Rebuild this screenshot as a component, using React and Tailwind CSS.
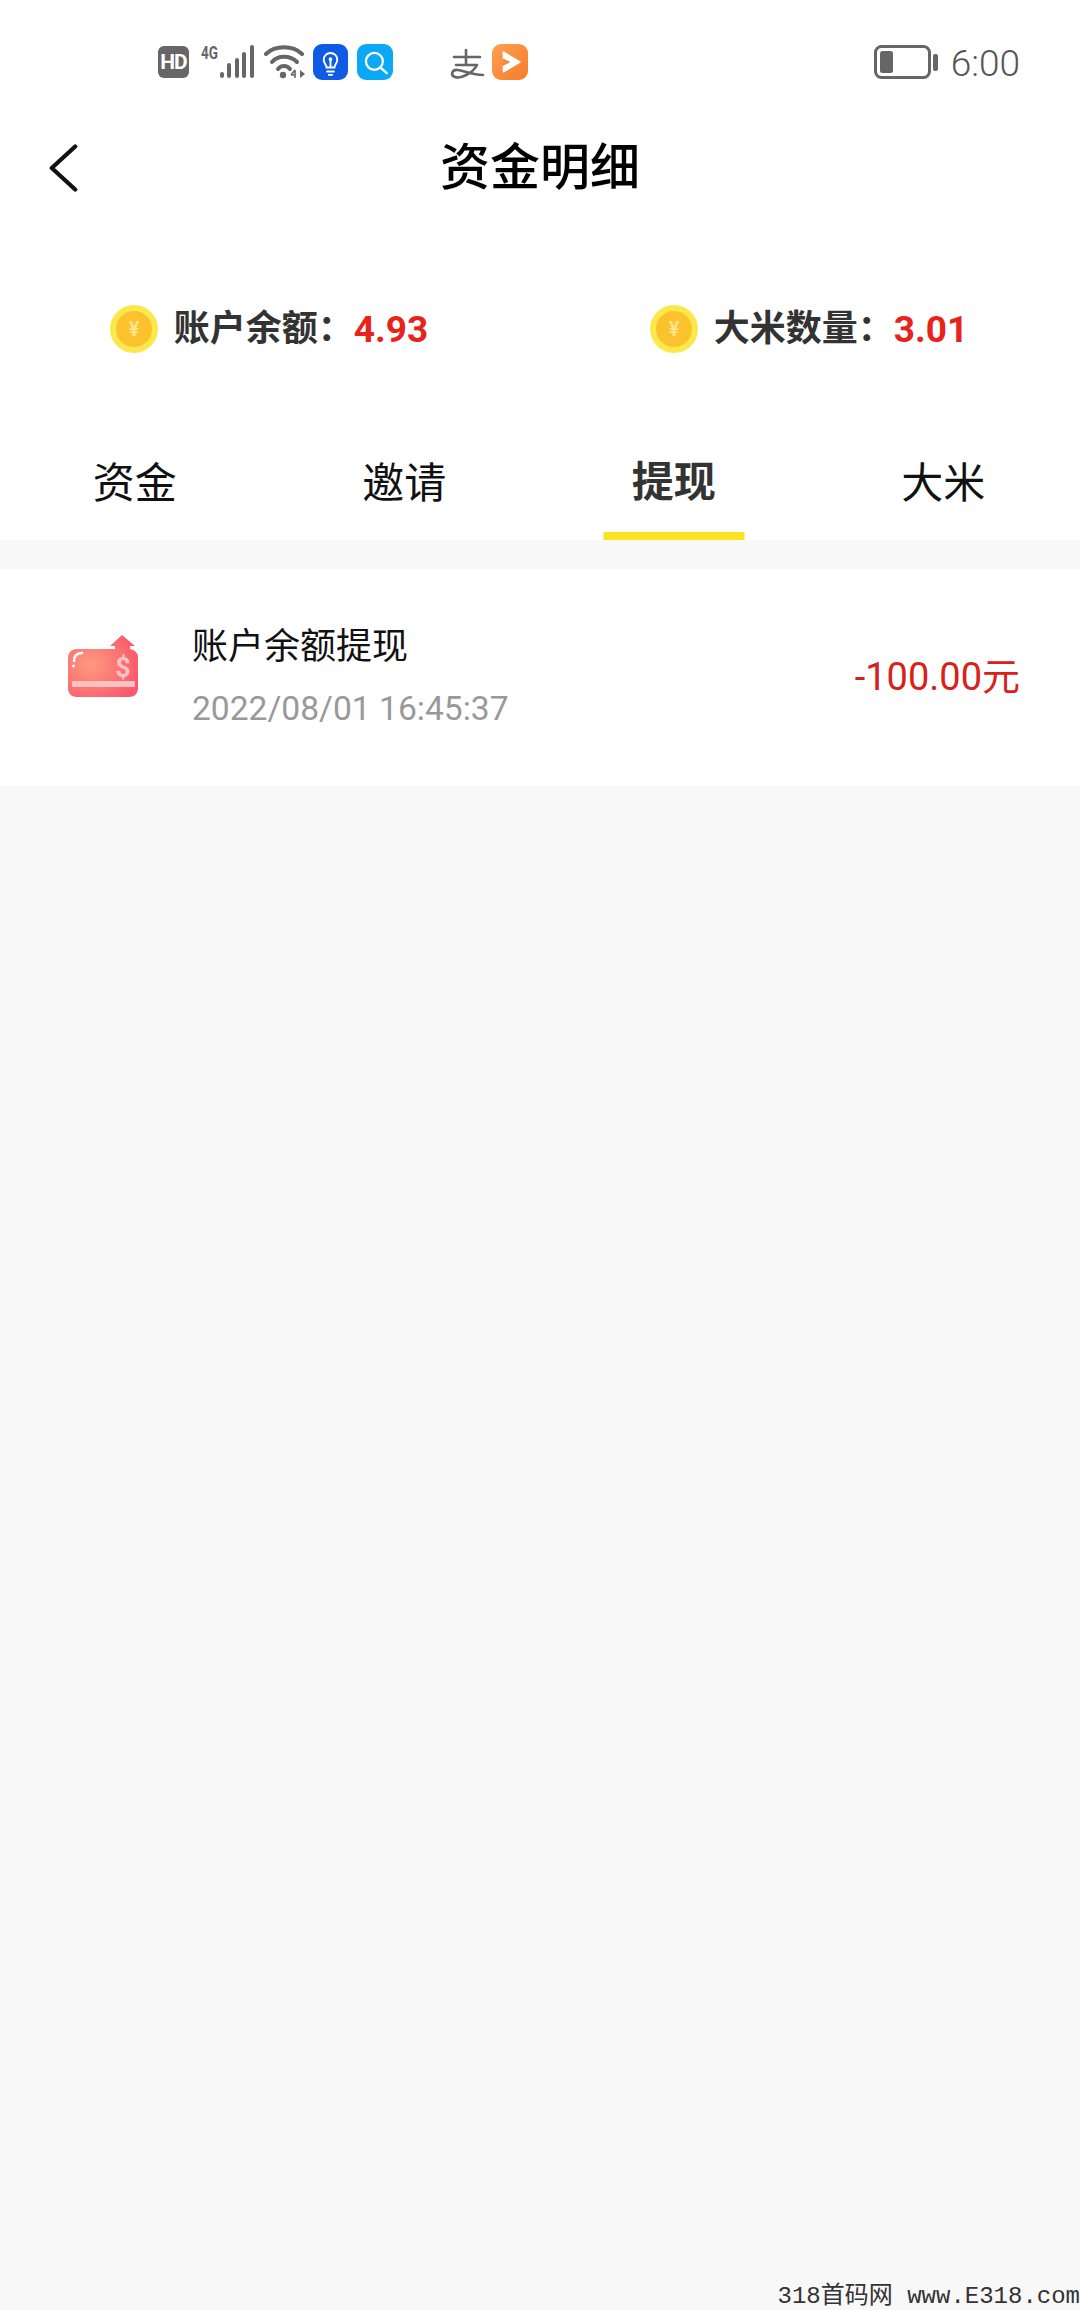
import React from 'react';

const cjk = "font-['Roboto','Noto_Sans_CJK_SC',sans-serif]";

const HdIcon = () => (
  <div className="w-[31px] h-[32px] rounded-[6px] bg-[#666] flex items-center justify-center">
    <span className="font-['Roboto',sans-serif] font-bold text-[21px] leading-none text-white tracking-[-1px]">HD</span>
  </div>
);

const SignalIcon = () => (
  <div className="relative w-[54px] h-[36px] ml-[12px]">
    <span className="absolute left-0 top-[2px] font-['Roboto',sans-serif] font-bold text-[18px] leading-[14px] text-[#666] scale-x-75 origin-left">4G</span>
    <svg viewBox="0 0 54 36" className="w-[54px] h-[36px]">
      <rect x="19" y="28" width="4" height="6" rx="2" fill="#666" />
      <rect x="26" y="19" width="4" height="15" rx="2" fill="#666" />
      <rect x="34" y="14" width="4" height="20" rx="2" fill="#666" />
      <rect x="41" y="8" width="4" height="26" rx="2" fill="#666" />
      <rect x="49" y="1" width="4" height="33" rx="2" fill="#666" />
    </svg>
  </div>
);

const WifiIcon = () => (
  <svg viewBox="0 0 42 36" className="w-[42px] h-[36px] ml-[9px]">
    <path d="M2 10 C11 1 29 1 38 10" fill="none" stroke="#666" strokeWidth="4" strokeLinecap="round" />
    <path d="M8 18 C14 11 26 11 33 18" fill="none" stroke="#666" strokeWidth="4" strokeLinecap="round" />
    <path d="M14 25 C17 21 23 21 26 25" fill="none" stroke="#666" strokeWidth="4" strokeLinecap="round" />
    <circle cx="19" cy="31" r="3.2" fill="#666" />
    <path d="M31 26 V34 M27 31 L31 26 M27 31 H31" fill="none" stroke="#666" strokeWidth="1.6" />
    <path d="M36 26 V34 L41 30 Z" fill="#666" />
  </svg>
);

const BulbApp = () => (
  <div className="w-[35px] h-[36px] rounded-[9px] bg-[#0f5be6] flex items-center justify-center ml-[7px]">
    <svg viewBox="0 0 24 24" className="w-[27px] h-[27px]" fill="none" stroke="#fff" strokeWidth="1.7" strokeLinecap="round">
      <path d="M8.5 16.5 C8.5 14 6 13 6 9.5 A6 6 0 0 1 18 9.5 C18 13 15.500 14 15.500 16.500 Z" />
      <path d="M9 20 H15 M10.500 23 H13.500 M12 16 V10" />
      <circle cx="12" cy="9" r="0.8" fill="#fff" />
    </svg>
  </div>
);

const SearchApp = () => (
  <div className="w-[36px] h-[36px] rounded-[9px] bg-[#0ba8f5] flex items-center justify-center ml-[9px]">
    <svg viewBox="0 0 24 24" className="w-[27px] h-[27px]" fill="none" stroke="#fff" strokeWidth="2" strokeLinecap="round">
      <circle cx="11" cy="11" r="7.500" />
      <path d="M16.500 16.500 L22 21.500" />
    </svg>
  </div>
);

// alipay logo, a stylised mark
const AlipayIcon = () => (
  <svg viewBox="0 0 36 36" className="w-[36px] h-[36px] ml-[56px]" fill="none" stroke="#666" strokeWidth="2.600" strokeLinecap="round" strokeLinejoin="round">
    <path d="M5 13 H31 M17 6 V21 M7 21 H28 C24 29 12 35 6 33 C1 31 3 25 9 26 C16 27 24 31 34 31" />
  </svg>
);

const VideoApp = () => (
  <div className="w-[36px] h-[36px] rounded-[9px] bg-gradient-to-br from-[#ffa04f] to-[#f57c2b] flex items-center justify-center ml-[7px]">
    <svg viewBox="0 0 24 24" className="w-[26px] h-[26px]">
      <path d="M6 3 L21 12 L6 21 Z" fill="#fff" stroke="#fff" strokeWidth="1.500" strokeLinejoin="round" />
      <path d="M5 8.500 L12.500 12 L5 16 Z" fill="#f58a3a" />
    </svg>
  </div>
);

const BatteryIcon = () => (
  <svg viewBox="0 0 64 34" className="w-[64px] h-[34px]">
    <rect x="1.500" y="1.500" width="54" height="31" rx="6" fill="none" stroke="#666" strokeWidth="3" />
    <rect x="6" y="6" width="13" height="22" rx="2.500" fill="#666" />
    <rect x="59" y="9" width="5" height="17" rx="2" fill="#666" />
  </svg>
);

const StatusBar = () => (
  <div className="h-[124px] flex items-start pt-[44px] pl-[158px] pr-[60px]">
    <div className="flex items-center h-[36px]">
      <HdIcon />
      <SignalIcon />
      <WifiIcon />
      <BulbApp />
      <SearchApp />
      <AlipayIcon />
      <VideoApp />
    </div>
    <div className="ml-auto flex items-center h-[36px] gap-[13px]">
      <BatteryIcon />
      <span className="font-['Roboto',sans-serif] font-light text-[37px] leading-none text-[#555] pt-[2px]">6:00</span>
    </div>
  </div>
);

const Header = () => (
  <div className="relative h-[86px] flex items-center justify-center pt-[2px]">
    <svg viewBox="0 0 32 52" className="absolute left-[48px] top-[19px] w-[30px] h-[50px]" fill="none" stroke="#111" strokeWidth="4.500" strokeLinecap="round" strokeLinejoin="round">
      <path d="M29 3 L4 26 L29 49" />
    </svg>
    <h1 className={`${cjk} text-[50px] leading-none text-black font-medium`}>资金明细</h1>
  </div>
);

const Coin = () => (
  <svg viewBox="0 0 48 48" className="w-[48px] h-[48px] shrink-0">
    <circle cx="24" cy="24" r="24" fill="#fbe84a" />
    <circle cx="24" cy="24" r="18" fill="#fcc22e" />
    <text x="24" y="31" textAnchor="middle" fontSize="20" fontWeight="700" fill="#fde58c" fontFamily="Roboto, sans-serif">¥</text>
  </svg>
);

const Stat = ({ label, value }) => (
  <div className="flex items-center justify-center gap-[16px] pr-[2px]">
    <Coin />
    <div className={`${cjk} flex items-center font-bold`}>
      <span className="text-[36px] leading-none text-[#333]">{label}：</span>
      <span className="text-[37px] leading-none text-[#e8231a]">{value}</span>
    </div>
  </div>
);

const tabs = ['资金', '邀请', '提现', '大米'];

const Tabs = () => (
  <div className="grid grid-cols-4 h-[148px] pr-[2px]">
    {tabs.map((tab, i) => (
      <div key={tab} className="relative flex items-center justify-center pt-[35px]">
        <span className={`${cjk} text-[42px] leading-none ${i === 2 ? 'font-bold text-[#333] -mt-[2px]' : 'text-[#111]'}`}>{tab}</span>
        {i === 2 && <div className="absolute bottom-0 left-1/2 -translate-x-1/2 w-[141px] h-[8px] bg-[#fae31f]" />}
      </div>
    ))}
  </div>
);

const CardIcon = () => (
  <svg viewBox="0 0 72 64" className="w-[72px] h-[64px] shrink-0 -mt-[21px]">
    <defs>
      <radialGradient id="card" cx="32%" cy="48%" r="70%">
        <stop offset="0%" stopColor="#fd9a7e" />
        <stop offset="100%" stopColor="#fb5a6e" />
      </radialGradient>
    </defs>
    <path d="M10 14 H48 V11 H43 L55 0 L68 11 H63 V14 C68 15 71 18 71 22 V53 C71 58 68 62 62 62 H10 C4 62 1 58 1 53 V23 C1 18 4 14 10 14 Z" fill="url(#card)" />
    <rect x="5" y="46" width="63" height="6" rx="1" fill="#fcc2c2" />
    <path d="M7 26 C7 21 10 18 15 18" fill="none" stroke="#fff" strokeWidth="2.500" strokeLinecap="round" />
    <circle cx="6.500" cy="31" r="1.500" fill="#fff" />
    <text x="56" y="42" textAnchor="middle" fontSize="27" fontWeight="700" fill="#fcc2c2" fontFamily="Roboto, sans-serif">$</text>
  </svg>
);

const Row = () => (
  <div className="mt-[29px] h-[217px] bg-white flex items-center pl-[67px] pr-[60px]">
    <CardIcon />
    <div className="ml-[53px] flex flex-col gap-[26px] pt-[1px]">
      <span className={`${cjk} text-[36px] leading-[36px] text-[#111]`}>账户余额提现</span>
      <span className="font-['Roboto',sans-serif] text-[33.6px] leading-[36px] text-[#999]">2022/08/01 16:45:37</span>
    </div>
    <span className={`${cjk} ml-auto -mt-[2px] text-[38px] leading-none text-[#d8211a]`}>-100.00元</span>
  </div>
);

export default function App() {
  return (
    <div className="relative w-[1080px] h-[2310px] overflow-hidden bg-[#f8f8f8]">
      <div className="bg-white">
        <StatusBar />
        <Header />
        <div className="grid grid-cols-2 h-[182px] pt-[56px]">
          <Stat label="账户余额" value="4.93" />
          <Stat label="大米数量" value="3.01" />
        </div>
        <Tabs />
      </div>
      <Row />
      <div className="absolute right-0 bottom-0 font-['Liberation_Mono','Noto_Sans_CJK_SC',monospace] text-[24px] leading-[26px] text-[#333] whitespace-nowrap">
        318首码网 www.E318.com
      </div>
    </div>
  );
}
